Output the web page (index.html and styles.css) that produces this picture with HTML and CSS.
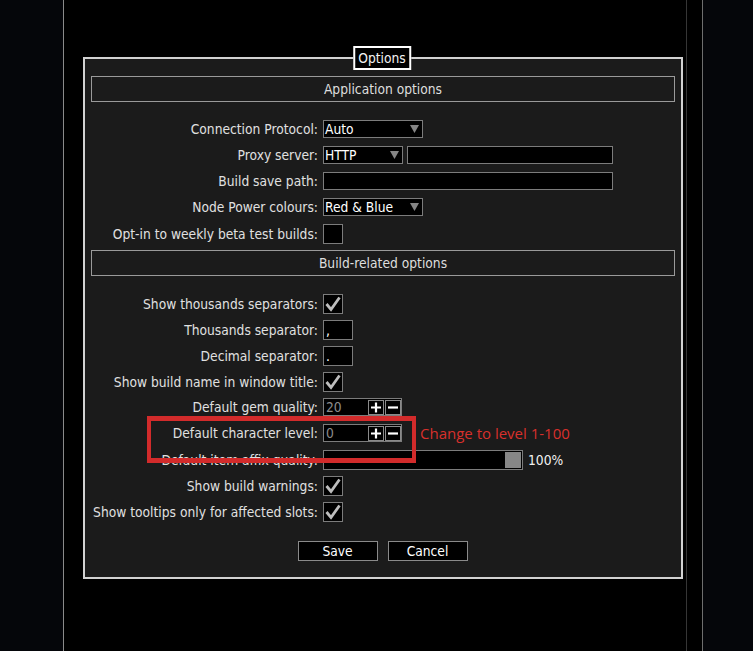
FILE: index.html
```html
<!DOCTYPE html>
<html>
<head>
<meta charset="utf-8">
<link rel="stylesheet" href="styles.css">
</head>
<body>
<div class="side-left"></div>
<div class="main">
  <div class="dialog">
    <div class="title">Options</div>
    <div class="header">Application options</div>
    <div class="section">
      <div class="row"><span class="lbl">Connection Protocol:</span>
        <div class="ctl"><div class="dd w100"><span>Auto</span><svg class="tri" width="9" height="8" viewBox="0 0 9 8"><polygon points="0,0 9,0 4.5,8" fill="#858585"/></svg></div></div>
      </div>
      <div class="row"><span class="lbl">Proxy server:</span>
        <div class="ctl"><div class="dd w80"><span>HTTP</span><svg class="tri" width="9" height="8" viewBox="0 0 9 8"><polygon points="0,0 9,0 4.5,8" fill="#858585"/></svg></div><div class="field w206"></div></div>
      </div>
      <div class="row"><span class="lbl">Build save path:</span>
        <div class="ctl"><div class="field w290"></div></div>
      </div>
      <div class="row"><span class="lbl">Node Power colours:</span>
        <div class="ctl"><div class="dd w100"><span>Red &amp; Blue</span><svg class="tri" width="9" height="8" viewBox="0 0 9 8"><polygon points="0,0 9,0 4.5,8" fill="#858585"/></svg></div></div>
      </div>
      <div class="row tall"><span class="lbl">Opt-in to weekly beta test builds:</span>
        <div class="ctl"><div class="check"></div></div>
      </div>
    </div>
    <div class="header">Build-related options</div>
    <div class="section">
      <div class="row tall"><span class="lbl">Show thousands separators:</span>
        <div class="ctl"><div class="check"><svg width="18" height="18" viewBox="0 0 18 18"><polyline points="2.5,9 7,14.5 15.5,2.5" fill="none" stroke="#bdbdbd" stroke-width="2.8"/></svg></div></div>
      </div>
      <div class="row tall"><span class="lbl">Thousands separator:</span>
        <div class="ctl"><div class="field sep">,</div></div>
      </div>
      <div class="row tall"><span class="lbl">Decimal separator:</span>
        <div class="ctl"><div class="field sep">.</div></div>
      </div>
      <div class="row tall"><span class="lbl">Show build name in window title:</span>
        <div class="ctl"><div class="check"><svg width="18" height="18" viewBox="0 0 18 18"><polyline points="2.5,9 7,14.5 15.5,2.5" fill="none" stroke="#bdbdbd" stroke-width="2.8"/></svg></div></div>
      </div>
      <div class="row"><span class="lbl">Default gem quality:</span>
        <div class="ctl"><div class="num"><span class="val">20</span>
          <span class="pm"><svg width="14" height="13" viewBox="0 0 14 13"><path d="M2 6.5H12M7 1.5V11.5" stroke="#fff" stroke-width="2.2"/></svg></span>
          <span class="pm"><svg width="14" height="13" viewBox="0 0 14 13"><path d="M2 6.5H12" stroke="#fff" stroke-width="2.2"/></svg></span></div></div>
      </div>
      <div class="row"><span class="lbl">Default character level:</span>
        <div class="ctl"><div class="num"><span class="val">0</span>
          <span class="pm"><svg width="14" height="13" viewBox="0 0 14 13"><path d="M2 6.5H12M7 1.5V11.5" stroke="#fff" stroke-width="2.2"/></svg></span>
          <span class="pm"><svg width="14" height="13" viewBox="0 0 14 13"><path d="M2 6.5H12" stroke="#fff" stroke-width="2.2"/></svg></span></div></div>
      </div>
      <div class="row tall"><span class="lbl">Default item affix quality:</span>
        <div class="ctl"><div class="slider"><span class="thumb"></span></div><span class="pct">100%</span></div>
      </div>
      <div class="row tall"><span class="lbl">Show build warnings:</span>
        <div class="ctl"><div class="check"><svg width="18" height="18" viewBox="0 0 18 18"><polyline points="2.5,9 7,14.5 15.5,2.5" fill="none" stroke="#bdbdbd" stroke-width="2.8"/></svg></div></div>
      </div>
      <div class="row tall"><span class="lbl">Show tooltips only for affected slots:</span>
        <div class="ctl"><div class="check"><svg width="18" height="18" viewBox="0 0 18 18"><polyline points="2.5,9 7,14.5 15.5,2.5" fill="none" stroke="#bdbdbd" stroke-width="2.8"/></svg></div></div>
      </div>
    </div>
    <div class="buttons">
      <div class="btn">Save</div>
      <div class="btn">Cancel</div>
    </div>
    <div class="redbox"></div>
    <div class="note">Change to level 1-100</div>
  </div>
</div>
<div class="gutter"></div>
<div class="side-right"></div>
</body>
</html>
```

FILE: styles.css
```css
html, body {
  margin: 0;
  padding: 0;
}
body {
  width: 753px;
  height: 651px;
  overflow: hidden;
  background: #000;
  display: flex;
  font-family: "DejaVu Sans Condensed", "DejaVu Sans", sans-serif;
  font-stretch: condensed;
  font-size: 13.7px;
  color: #e0e0e0;
}
.side-left {
  width: 63px;
  background: #05060a;
}
.main {
  width: 624px;
  box-sizing: border-box;
  border-left: 1px solid #8a8a8a;
  border-right: 1px solid #363636;
  background: #000;
  padding: 57px 0 0 19px;
}
.gutter {
  width: 15px;
  background: #000;
}
.side-right {
  flex: 1;
  border-left: 1px solid #6e6e6e;
  background: #05060a;
}
.dialog {
  position: relative;
  width: 600px;
  height: 522px;
  box-sizing: border-box;
  border: 2px solid #d2d2d2;
  background: #1b1b1b;
  padding: 17px 6px 0;
}
.title {
  position: absolute;
  top: -13px;
  left: 50%;
  transform: translateX(-50%);
  margin-left: -1px;
  height: 24px;
  box-sizing: border-box;
  border: 2px solid #fff;
  background: #000;
  color: #f2f2f2;
  padding: 0 3px;
  line-height: 20px;
}
.header {
  height: 26px;
  box-sizing: border-box;
  border: 1px solid #9a9a9a;
  text-align: center;
  line-height: 24px;
  color: #dedede;
}
.section {
  padding: 15px 0 3px;
}
.row {
  display: grid;
  grid-template-columns: 227px 1fr;
  column-gap: 5px;
  height: 26px;
  box-sizing: border-box;
  padding-top: 3px;
  align-items: start;
}
.lbl {
  display: flex;
  align-items: center;
  justify-content: flex-end;
  white-space: nowrap;
  height: 18px;
  color: #e0e0e0;
}
.row.tall .lbl {
  height: 20px;
}
.ctl {
  display: flex;
  align-items: center;
  gap: 4px;
}
.dd {
  height: 18px;
  box-sizing: border-box;
  border: 1px solid #7c7c7c;
  background: #000;
  color: #fff;
  display: flex;
  align-items: center;
  justify-content: space-between;
  padding: 0 3px 0 1px;
  line-height: 16px;
}
.tri {
  display: block;
}
.w100 { width: 100px; }
.w80 { width: 80px; }
.field {
  height: 18px;
  box-sizing: border-box;
  border: 1px solid #7c7c7c;
  background: #000;
  color: #fff;
}
.w206 { width: 206px; }
.w290 { width: 290px; }
.field.sep {
  width: 30px;
  height: 20px;
  line-height: 18px;
  padding-left: 2px;
}
.check {
  width: 20px;
  height: 20px;
  box-sizing: border-box;
  border: 1px solid #7c7c7c;
  background: #000;
  display: flex;
  align-items: center;
  justify-content: center;
}
.check svg {
  display: block;
}
.num {
  width: 79px;
  height: 18px;
  box-sizing: border-box;
  border: 1px solid #7c7c7c;
  background: #000;
  display: flex;
  align-items: center;
  gap: 1px;
}
.val {
  flex: 1;
  color: #8c8c8c;
  padding-left: 2px;
  line-height: 16px;
}
.pm {
  width: 16px;
  height: 15px;
  box-sizing: border-box;
  border: 1px solid #8a8a8a;
  background: #000;
  display: flex;
  align-items: center;
  justify-content: center;
}
.pm svg {
  display: block;
}
.slider {
  width: 200px;
  height: 20px;
  box-sizing: border-box;
  border: 1px solid #7c7c7c;
  background: #000;
  display: flex;
  justify-content: flex-end;
  align-items: center;
  padding-right: 1px;
}
.thumb {
  width: 16px;
  height: 16px;
  background: #878787;
}
.pct {
  color: #f0f0f0;
  margin-left: 1px;
}
.buttons {
  display: flex;
  justify-content: center;
  gap: 10px;
  margin-top: 13px;
  margin-left: -1px;
}
.btn {
  width: 80px;
  height: 20px;
  box-sizing: border-box;
  border: 1px solid #8a8a8a;
  background: #000;
  color: #fff;
  text-align: center;
  line-height: 18px;
}
.redbox {
  position: absolute;
  left: 62px;
  top: 357px;
  width: 269px;
  height: 47px;
  box-sizing: border-box;
  border: 4px solid #d22b2b;
  border-top-width: 5px;
  border-bottom-width: 5px;
}
.note {
  position: absolute;
  left: 335px;
  top: 364px;
  font-family: "Open Sans", "Noto Sans", sans-serif;
  font-stretch: normal;
  font-size: 15px;
  line-height: 20px;
  color: #d8302c;
  white-space: nowrap;
}
```
